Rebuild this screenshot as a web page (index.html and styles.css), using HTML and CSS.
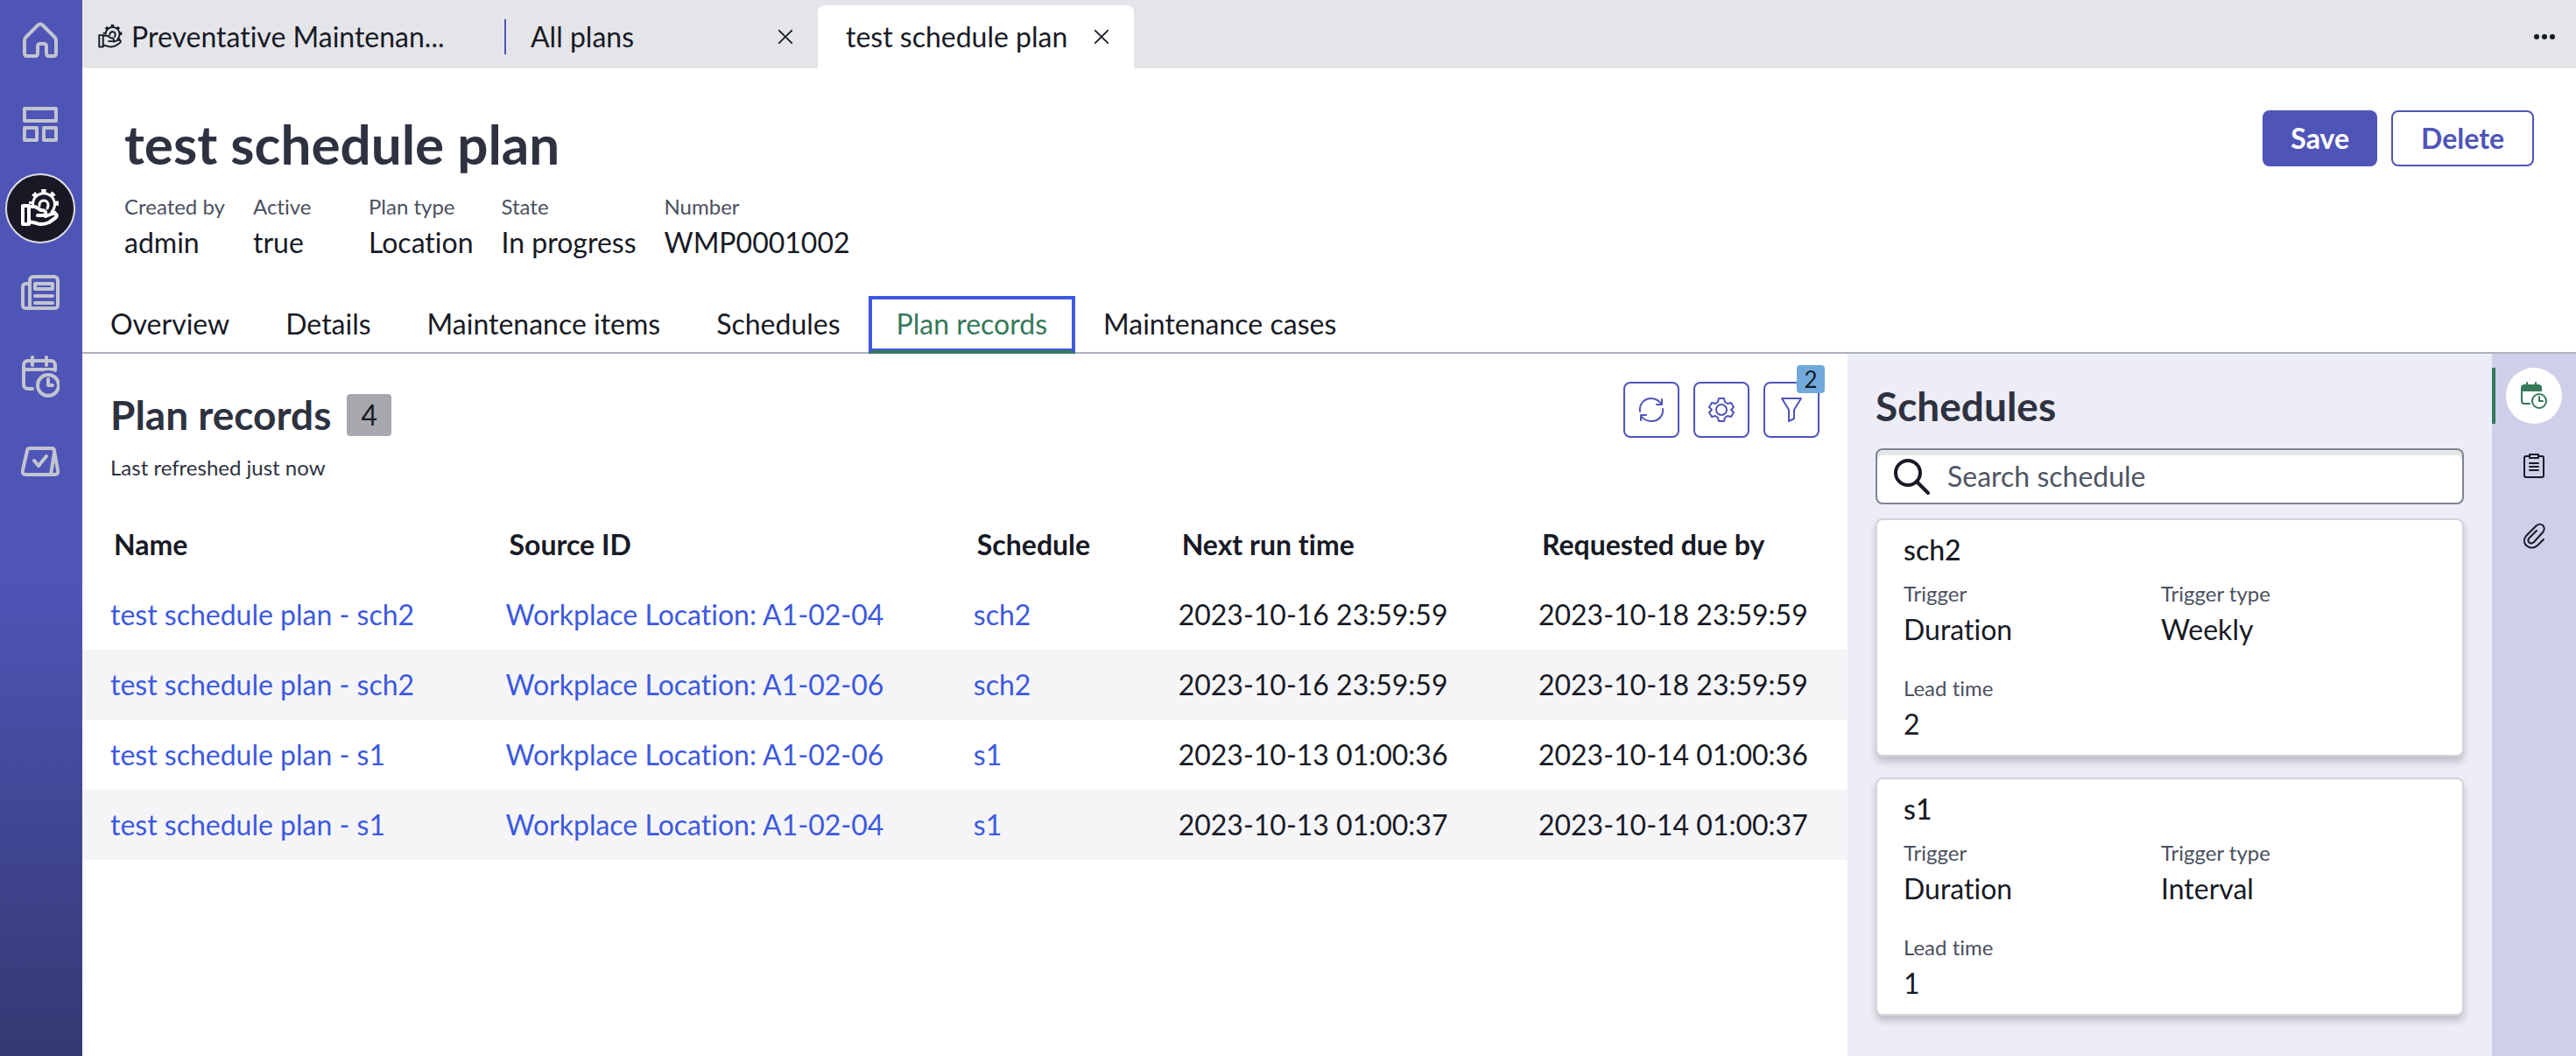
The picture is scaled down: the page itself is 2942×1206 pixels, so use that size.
FILE: index.html
```html
<!DOCTYPE html>
<html lang="en">
<head>
    <meta charset="UTF-8">
    <meta name="viewport" content="width=device-width, initial-scale=1.0">
    <title>test schedule plan</title>
    <link rel="stylesheet" href="styles.css">
</head>
<body>

<!-- Icons used more than once -->
<svg class="icon-defs" aria-hidden="true">
    <symbol id="icon-service" viewBox="0 -3 44 44">
        <path d="M2 16h7v21H2z"/>
        <path d="M9 17h6c3 0 5 3 8 4 4 0 6 1 5 6h-9M28 28l8-3c5-1 6 3 3 5l-7 5c-5 2-10 3-14 1l-9-2"/>
        <path class="gear-ring" d="M13.5 14A12.5 12.5 0 1 1 35 23"/>
        <path class="gear-teeth" d="M11.5 14A14.5 14.5 0 1 1 36.2 24.2"/>
        <path class="gear-ring" d="M21 16c-1-8 11-8 10 0l-1 3"/>
    </symbol>
    <symbol id="icon-close" viewBox="0 0 20 20">
        <path d="M2 2l16 16M18 2L2 18"/>
    </symbol>
</svg>

<div class="app">
    <nav class="sidebar">
        <a href="#" class="side-link" aria-label="Home">
            <svg class="side-icon" viewBox="0 0 44 44">
                <path d="M4 22c0-2 1-3 2-4L19 5c2-2 4-2 6 0l13 13c1 1 2 2 2 4v15c0 2-1 3-3 3h-5c-2 0-3-1-3-3v-8c0-2-1-3-3-3h-4c-2 0-3 1-3 3v8c0 2-1 3-3 3H7c-2 0-3-1-3-3z"/>
            </svg>
        </a>
        <a href="#" class="side-link" aria-label="Dashboard">
            <svg class="side-icon" viewBox="0 0 44 44">
                <path d="M4 4h36v14H4zM4 26h14v14H4zM26 26h14v14H26z"/>
            </svg>
        </a>
        <a href="#" class="side-link active" aria-label="Preventative Maintenance">
            <svg class="side-icon"><use href="#icon-service"/></svg>
        </a>
        <a href="#" class="side-link" aria-label="News">
            <svg class="side-icon" viewBox="0 0 44 44">
                <path d="M14 4h24c2 0 4 2 4 4v28c0 3-1 4-4 4H6c-3 0-4-1-4-4V16c0-3 1-4 4-4h4M10 40V8c0-2 2-4 4-4M16 12h20v6H16zM16 26h20M16 34h20"/>
            </svg>
        </a>
        <a href="#" class="side-link" aria-label="Schedule">
            <svg class="side-icon calendar" viewBox="0 0 44 48">
                <path d="M13 38H8c-3 0-5-2-5-5V11c0-3 2-5 5-5h26c3 0 5 2 5 5v6M3 16h36M13 2v9M29 2v9"/>
                <circle class="knockout" cx="31" cy="33" r="16"/>
                <circle cx="31" cy="34" r="12"/>
                <path d="M31 27v7h5"/>
            </svg>
        </a>
        <a href="#" class="side-link" aria-label="Approvals">
            <svg class="side-icon" viewBox="0 0 44 44">
                <path d="M10 8h25c2 0 3 1 3 3l4 22c1 3-1 5-3 5H5c-2 0-4-2-3-5l5-22c0-2 1-3 3-3zM38 13l-4 25M15 22l5 6 9-11"/>
            </svg>
        </a>
    </nav>

    <div class="workspace">
        <div class="tab-bar">
            <div class="page-tab home-tab">
                <svg class="tab-icon"><use href="#icon-service"/></svg>
                <a href="#">Preventative Maintenan...</a>
            </div>
            <div class="page-tab list-tab">
                <a href="#">All plans</a>
                <button class="close" aria-label="Close All plans"><svg><use href="#icon-close"/></svg></button>
            </div>
            <div class="page-tab current-tab">
                <a href="#">test schedule plan</a>
                <button class="close" aria-label="Close test schedule plan"><svg><use href="#icon-close"/></svg></button>
            </div>
            <button class="more" aria-label="More">
                <svg viewBox="0 0 24 6"><circle cx="3" cy="3" r="3"/><circle cx="12" cy="3" r="3"/><circle cx="21" cy="3" r="3"/></svg>
            </button>
        </div>

        <header class="record-header">
            <div>
                <h1>test schedule plan</h1>
                <dl class="fields">
                    <div class="field"><dt>Created by</dt><dd>admin</dd></div>
                    <div class="field"><dt>Active</dt><dd>true</dd></div>
                    <div class="field"><dt>Plan type</dt><dd>Location</dd></div>
                    <div class="field"><dt>State</dt><dd>In progress</dd></div>
                    <div class="field"><dt>Number</dt><dd>WMP0001002</dd></div>
                </dl>
            </div>
            <div class="actions">
                <button class="btn btn-primary">Save</button>
                <button class="btn">Delete</button>
            </div>
        </header>

        <div class="record-tabs" role="tablist">
            <button role="tab">Overview</button>
            <button role="tab">Details</button>
            <button role="tab">Maintenance items</button>
            <button role="tab">Schedules</button>
            <button role="tab" class="selected" aria-selected="true">Plan records</button>
            <button role="tab">Maintenance cases</button>
        </div>

        <div class="content">
            <main class="records">
                <div class="list-header">
                    <div>
                        <h2 class="list-title">Plan records <span class="count">4</span></h2>
                        <p class="refreshed">Last refreshed just now</p>
                    </div>
                    <div class="tools">
                        <button class="tool" aria-label="Refresh">
                            <svg viewBox="0 0 32 32"><path d="M3 18C2 9 8 3 16 3c5 0 9 3 12 7M28 4v6h-6M29 15c1 8-5 14-13 14-5 0-9-2-12-6M4 28v-6h6"/></svg>
                        </button>
                        <button class="tool" aria-label="Settings">
                            <svg viewBox="0 0 32 32"><path d="M13 3h6l1 4 3 2 4-1 3 5-3 3 3 3-3 5-4-1-3 2-1 4h-6l-1-4-3-2-4 1-3-5 3-3-3-3 3-5 4 1 3-2z"/><circle cx="16" cy="16" r="6"/></svg>
                        </button>
                        <button class="tool" aria-label="Filter">
                            <svg viewBox="0 0 32 32"><path d="M5 3h22l-8 13v10l-6 3V16z"/></svg>
                            <span class="filter-count">2</span>
                        </button>
                    </div>
                </div>
                <table class="record-table">
                    <thead>
                        <tr>
                            <th class="col-name">Name</th>
                            <th class="col-source">Source ID</th>
                            <th class="col-schedule">Schedule</th>
                            <th class="col-next">Next run time</th>
                            <th>Requested due by</th>
                        </tr>
                    </thead>
                    <tbody>
                        <tr>
                            <td><a href="#">test schedule plan - sch2</a></td>
                            <td><a href="#">Workplace Location: A1-02-04</a></td>
                            <td><a href="#">sch2</a></td>
                            <td>2023-10-16 23:59:59</td>
                            <td>2023-10-18 23:59:59</td>
                        </tr>
                        <tr>
                            <td><a href="#">test schedule plan - sch2</a></td>
                            <td><a href="#">Workplace Location: A1-02-06</a></td>
                            <td><a href="#">sch2</a></td>
                            <td>2023-10-16 23:59:59</td>
                            <td>2023-10-18 23:59:59</td>
                        </tr>
                        <tr>
                            <td><a href="#">test schedule plan - s1</a></td>
                            <td><a href="#">Workplace Location: A1-02-06</a></td>
                            <td><a href="#">s1</a></td>
                            <td>2023-10-13 01:00:36</td>
                            <td>2023-10-14 01:00:36</td>
                        </tr>
                        <tr>
                            <td><a href="#">test schedule plan - s1</a></td>
                            <td><a href="#">Workplace Location: A1-02-04</a></td>
                            <td><a href="#">s1</a></td>
                            <td>2023-10-13 01:00:37</td>
                            <td>2023-10-14 01:00:37</td>
                        </tr>
                    </tbody>
                </table>
            </main>

            <aside class="schedules">
                <h2>Schedules</h2>
                <label class="search">
                    <svg viewBox="0 0 42 42"><circle cx="17" cy="17" r="14"/><path d="M27 27l13 13"/></svg>
                    <input type="text" placeholder="Search schedule" aria-label="Search schedule">
                </label>
                <section class="card">
                    <h3>sch2</h3>
                    <dl class="card-fields">
                        <div><dt>Trigger</dt><dd>Duration</dd></div>
                        <div><dt>Trigger type</dt><dd>Weekly</dd></div>
                        <div><dt>Lead time</dt><dd>2</dd></div>
                    </dl>
                </section>
                <section class="card">
                    <h3>s1</h3>
                    <dl class="card-fields">
                        <div><dt>Trigger</dt><dd>Duration</dd></div>
                        <div><dt>Trigger type</dt><dd>Interval</dd></div>
                        <div><dt>Lead time</dt><dd>1</dd></div>
                    </dl>
                </section>
            </aside>

            <div class="rail">
                <div class="rail-item active">
                    <button aria-label="Schedules">
                        <svg viewBox="0 0 32 32">
                            <path class="solid" d="M1 11V7c0-3 2-4 4-4h16c3 0 4 2 4 4v4z"/>
                            <path d="M11 25H5c-2 0-3-1-3-3V9M8 1v4M18 1v4"/>
                            <circle cx="22" cy="22" r="8"/>
                            <path d="M22 17v5h4"/>
                        </svg>
                    </button>
                </div>
                <div class="rail-item">
                    <button aria-label="Notes">
                        <svg viewBox="0 0 32 32"><path d="M11 5H7c-1 0-2 1-2 2v20c0 1 1 2 2 2h18c1 0 2-1 2-2V7c0-1-1-2-2-2h-4M11 3h10v4H11zM11 13h10M11 17h10M11 21h10"/></svg>
                    </button>
                </div>
                <div class="rail-item">
                    <button aria-label="Attachments">
                        <svg viewBox="0 0 32 32"><path d="M27 20l-7 7c-8 7-20-2-13-11L18 5c6-6 13 1 8 7L16 23c-4 4-9-1-5-5l8-8"/></svg>
                    </button>
                </div>
            </div>
        </div>
    </div>
</div>

</body>
</html>
```
FILE: styles.css
```css
* {
    box-sizing: border-box;
}
body {
    margin: 0;
    font-family: 'Lato', sans-serif;
    font-size: 32px;
    line-height: 40px;
    font-variant-ligatures: none;
    color: #181a25;
    background: white;
}
h1, h2, h3, p, dl, dd {
    margin: 0;
}
a {
    color: inherit;
    text-decoration: none;
}
button {
    font: inherit;
    font-variant-ligatures: none;
    color: inherit;
    background: none;
    border: none;
    padding: 0;
    cursor: pointer;
}
svg {
    display: block;
    fill: none;
    stroke: currentColor;
    stroke-width: 2;
    stroke-linecap: round;
    stroke-linejoin: round;
}
.icon-defs {
    position: absolute;
    width: 0;
    height: 0;
}
.gear-ring {
    stroke-width: 3;
}
.gear-teeth {
    stroke-width: 5;
    stroke-linecap: butt;
    stroke-dasharray: 5 6;
    stroke-dashoffset: 2;
}
.app {
    display: flex;
    min-height: 100vh;
}

/* Left navigation */
.sidebar {
    flex: none;
    width: 94px;
    padding: 6px 8px 6px 6px;
    display: flex;
    flex-direction: column;
    gap: 16px;
    background: linear-gradient(#4f55b7 55%, #343872);
    color: #c2c4cf;
}
.side-link {
    width: 80px;
    height: 80px;
    display: flex;
    justify-content: center;
    align-items: center;
    border-radius: 50%;
}
.side-link.active {
    background: #181825;
    border: 2px solid #dddde6;
    color: white;
}
.side-icon {
    width: 44px;
    height: 44px;
    stroke-width: 4;
}
.side-icon.calendar {
    height: 48px;
}
.knockout {
    fill: #4f55b7;
    stroke: none;
}

/* Workspace tabs */
.workspace {
    flex: 1;
    min-width: 0;
    display: flex;
    flex-direction: column;
}
.tab-bar {
    display: flex;
    height: 78px;
    padding-top: 6px;
    background: #e4e5e9;
}
.page-tab {
    display: flex;
    align-items: center;
    justify-content: space-between;
    padding: 0 28px 0 32px;
}
.home-tab {
    justify-content: flex-start;
    gap: 10px;
    width: 482px;
    padding-left: 18px;
}
.tab-icon {
    width: 28px;
    height: 28px;
    stroke-width: 3;
}
.list-tab {
    width: 358px;
    padding-left: 0;
}
.list-tab::before {
    content: "";
    width: 2px;
    height: 40px;
    margin-right: 28px;
    background: #4f55b7;
}
.list-tab a {
    flex: 1;
}
.current-tab {
    gap: 30px;
    background: white;
    border-radius: 8px 8px 0 0;
}
.close svg {
    width: 18px;
    height: 18px;
}
.more {
    margin: 0 24px 0 auto;
}
.more svg {
    width: 24px;
    height: 6px;
    fill: currentColor;
    stroke: none;
}

/* Record header */
.record-header {
    display: flex;
    justify-content: space-between;
    padding: 48px 48px 36px;
}
h1 {
    font-size: 62px;
    line-height: 76px;
    color: #2e3240;
}
.fields {
    display: flex;
    gap: 32px;
    margin-top: 18px;
}
.field {
    min-width: 100px;
}
dt {
    font-size: 24px;
    line-height: 32px;
    color: #4b5060;
}
dd {
    line-height: 50px;
}
.actions {
    display: flex;
    gap: 16px;
}
.btn {
    height: 64px;
    padding: 0 32px;
    border: 2px solid #4f55b7;
    border-radius: 8px;
    color: #4f55b7;
    font-weight: bold;
}
.btn-primary {
    padding: 0 30px;
    background: #4f55b7;
    color: white;
}

/* Record tabs */
.record-tabs {
    display: flex;
    border-bottom: 2px solid #aeb2bd;
}
.record-tabs button {
    height: 64px;
    padding: 0 32px;
}
.record-tabs .selected {
    height: 66px;
    margin-bottom: -2px;
    padding: 0 28px 2px;
    border: 4px solid #3c59e0;
    border-bottom: 4px solid #36795a;
    box-shadow: inset 0 -2px #3c59e0;
    color: #36795a;
}

/* Record list */
.content {
    flex: 1;
    display: flex;
}
.records {
    flex: 1;
}
.list-header {
    display: flex;
    justify-content: space-between;
    padding: 32px;
}
h2 {
    font-size: 46px;
    line-height: 56px;
    color: #2e3240;
}
.list-title {
    display: flex;
    align-items: center;
    gap: 18px;
    padding-top: 10px;
}
.count {
    padding: 0 16px;
    border-radius: 4px;
    background: #a7a8ae;
    color: #181a25;
    font-size: 32px;
    font-weight: normal;
    line-height: 48px;
}
.refreshed {
    margin-top: 16px;
    font-size: 24px;
    line-height: 32px;
    color: #2e3240;
}
.tools {
    display: flex;
    gap: 16px;
}
.tool {
    position: relative;
    width: 64px;
    height: 64px;
    border: 2px solid #4f55b7;
    border-radius: 8px;
    color: #4f55b7;
}
.tool svg {
    width: 32px;
    height: 32px;
    margin: auto;
}
.filter-count {
    position: absolute;
    top: -21px;
    right: -8px;
    width: 32px;
    border-radius: 4px;
    background: #70a9da;
    color: #181a25;
    font-size: 26px;
    line-height: 32px;
}
.record-table {
    width: 100%;
    table-layout: fixed;
    border-collapse: collapse;
    text-align: left;
}
.record-table th,
.record-table td {
    height: 80px;
    padding: 0 0 0 32px;
    white-space: nowrap;
}
.record-table th {
    padding-left: 36px;
}
.record-table tbody tr:nth-child(even) {
    background: #f5f5f8;
}
.record-table a {
    color: #3c59e0;
}
.col-name {
    width: 22.4%;
}
.col-source {
    width: 26.5%;
}
.col-schedule {
    width: 11.6%;
}
.col-next {
    width: 20.4%;
}

/* Schedules panel */
.schedules {
    width: 736px;
    padding: 32px;
    background: #ededf7;
}
.search {
    display: flex;
    align-items: center;
    gap: 20px;
    height: 64px;
    margin: 20px 0 16px;
    padding: 0 18px;
    border: 2px solid #7e8591;
    border-radius: 8px;
    background: white;
    box-shadow: inset 0 6px #e5e7e7;
}
.search svg {
    width: 42px;
    height: 42px;
    stroke-width: 4;
}
.search input {
    flex: 1;
    border: none;
    outline: none;
    padding: 0;
    background: none;
    font: inherit;
}
.search input::placeholder {
    color: #4f5565;
}
.card {
    padding: 14px 30px 10px;
    border: 2px solid #d3d4dc;
    border-radius: 8px;
    background: white;
    box-shadow: 0 6px 8px rgba(0, 0, 0, 0.2);
}
.card + .card {
    margin-top: 24px;
}
.card h3 {
    font-size: 32px;
    font-weight: 500;
}
.card-fields {
    display: grid;
    grid-template-columns: 1fr 1fr;
    row-gap: 26px;
    margin-top: 14px;
    padding-right: 20px;
}

/* Right rail */
.rail {
    width: 96px;
    padding-top: 16px;
    display: flex;
    flex-direction: column;
    gap: 16px;
    background: #cfcfea;
}
.rail-item {
    display: flex;
    padding: 0 12px;
    border-left: 4px solid transparent;
}
.rail-item.active {
    border-color: #36795a;
    color: #36795a;
}
.rail-item button {
    width: 64px;
    height: 64px;
    border-radius: 50%;
}
.rail-item.active button {
    background: white;
}
.rail-item svg {
    width: 32px;
    height: 32px;
    margin: auto;
}
.solid {
    fill: currentColor;
    stroke: none;
}
```
